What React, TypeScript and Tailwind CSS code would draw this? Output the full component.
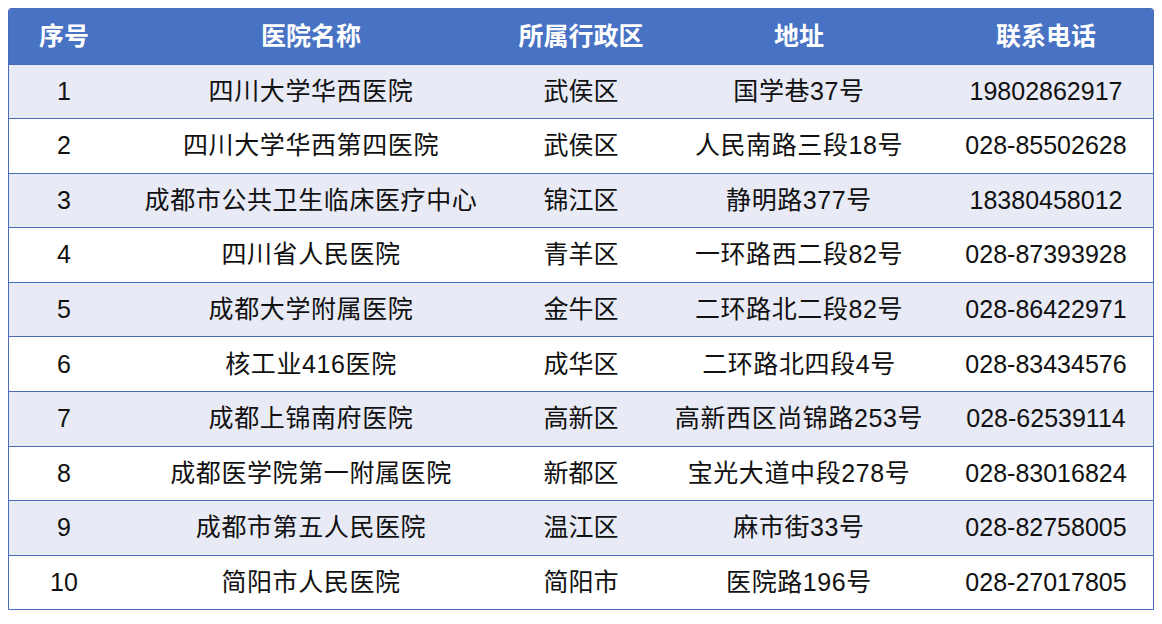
const rows = [
  ["1", "四川大学华西医院", "武侯区", "国学巷37号", "19802862917"],
  ["2", "四川大学华西第四医院", "武侯区", "人民南路三段18号", "028-85502628"],
  ["3", "成都市公共卫生临床医疗中心", "锦江区", "静明路377号", "18380458012"],
  ["4", "四川省人民医院", "青羊区", "一环路西二段82号", "028-87393928"],
  ["5", "成都大学附属医院", "金牛区", "二环路北二段82号", "028-86422971"],
  ["6", "核工业416医院", "成华区", "二环路北四段4号", "028-83434576"],
  ["7", "成都上锦南府医院", "高新区", "高新西区尚锦路253号", "028-62539114"],
  ["8", "成都医学院第一附属医院", "新都区", "宝光大道中段278号", "028-83016824"],
  ["9", "成都市第五人民医院", "温江区", "麻市街33号", "028-82758005"],
  ["10", "简阳市人民医院", "简阳市", "医院路196号", "028-27017805"],
];

const headers = ["序号", "医院名称", "所属行政区", "地址", "联系电话"];

const cols = "grid grid-cols-[110px_384px_156px_280px_1fr]";

export default function App() {
  return (
    <div className="w-[1162px] h-[624px] bg-white pt-2 pl-2 font-['Liberation_Sans','Noto_Sans_CJK_SC',sans-serif]">
      <div className="w-[1146px] border-[1.5px] border-[#4a6db5] rounded-t-[3px] overflow-hidden">
        <div className={`${cols} h-[54.5px] bg-[#4872c4] text-white text-[25px] font-bold items-center text-center`}>
          {headers.map((h) => (
            <div key={h}>{h}</div>
          ))}
        </div>
        {rows.map((r, i) => (
          <div
            key={r[0]}
            className={`${cols} h-[54.6px] items-center text-center text-[25px] text-[#111] border-t-[1.5px] border-[#4a6db5] ${
              i % 2 === 0 ? "bg-[#e8eaf5]" : "bg-white"
            }`}
          >
            {r.map((c, j) => (
              <div key={j} className={j === 1 || j === 3 ? "tracking-[0.6px]" : ""}>
                {c}
              </div>
            ))}
          </div>
        ))}
      </div>
    </div>
  );
}
